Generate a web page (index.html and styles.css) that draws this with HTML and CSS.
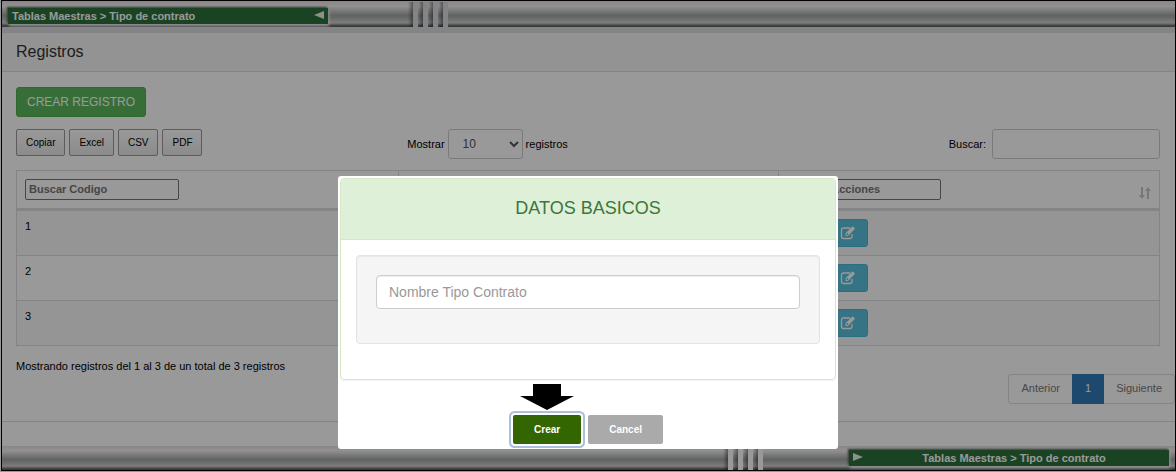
FILE: index.html
```html
<!DOCTYPE html>
<html lang="es">
<head>
<meta charset="utf-8">
<title>Tipo de contrato</title>
<link rel="stylesheet" href="styles.css">
</head>
<body>
<div class="frame">
  <header class="bar bar-top">
    <div class="crumb">
      <span class="crumb-text">Tablas Maestras &gt; Tipo de contrato</span>
      <svg class="crumb-arrow" width="10" height="8" viewBox="0 0 10 8"><path d="M0 4 10 0v8z" fill="#eee"/></svg>
    </div>
    <div class="ribs"></div>
  </header>

  <main class="panel">
    <h1 class="panel-title">Registros</h1>
    <div class="panel-body">
      <button class="btn-create" type="button">CREAR REGISTRO</button>
      <div class="tools">
        <div class="exports">
          <button class="btn-export" type="button">Copiar</button>
          <button class="btn-export" type="button">Excel</button>
          <button class="btn-export" type="button">CSV</button>
          <button class="btn-export" type="button">PDF</button>
        </div>
        <label class="length">Mostrar
          <select class="length-select"><option>10</option></select>
          registros</label>
        <label class="search">Buscar: <input class="search-input" type="search"></label>
      </div>
      <table class="grid">
        <thead>
          <tr>
            <th><input class="filter" type="text" placeholder="Buscar Codigo" aria-label="Buscar Codigo"></th>
            <th></th>
            <th>
              <div class="th-inner">
                <input class="filter" type="text" placeholder="Buscar Acciones" aria-label="Buscar Acciones">
                <svg class="sort" width="12" height="12" viewBox="0 0 12 12"><path d="M2 0h2v8h2L3 12 0 8h2zM8 12h2V4h2L9 0 6 4h2z" fill="#c6c6c6"/></svg>
              </div>
            </th>
          </tr>
        </thead>
        <tbody>
          <tr><td>1</td><td></td><td class="actions"><button class="btn-edit" type="button" aria-label="Editar"><svg width="16" height="14" viewBox="0 0 16 14"><path d="M10 2H3.500Q1.500 2 1.500 4v6.500q0 2 2 2H10q2 0 2-2V8" fill="none" stroke="#fff" stroke-width="1.300"/><path fill-rule="evenodd" d="M5.500 10V7.300L12 .8q.6-.5 1.200 0l1.300 1.300q.6.600 0 1.200L8 10zM6.500 7.800v1.300h1.200l.8-.8L7.300 7z" fill="#fff"/></svg></button></td></tr>
          <tr><td>2</td><td></td><td class="actions"><button class="btn-edit" type="button" aria-label="Editar"><svg width="16" height="14" viewBox="0 0 16 14"><path d="M10 2H3.500Q1.500 2 1.500 4v6.500q0 2 2 2H10q2 0 2-2V8" fill="none" stroke="#fff" stroke-width="1.300"/><path fill-rule="evenodd" d="M5.500 10V7.300L12 .8q.6-.5 1.200 0l1.300 1.300q.6.600 0 1.200L8 10zM6.500 7.800v1.300h1.200l.8-.8L7.300 7z" fill="#fff"/></svg></button></td></tr>
          <tr><td>3</td><td></td><td class="actions"><button class="btn-edit" type="button" aria-label="Editar"><svg width="16" height="14" viewBox="0 0 16 14"><path d="M10 2H3.500Q1.500 2 1.500 4v6.500q0 2 2 2H10q2 0 2-2V8" fill="none" stroke="#fff" stroke-width="1.300"/><path fill-rule="evenodd" d="M5.500 10V7.300L12 .8q.6-.5 1.200 0l1.300 1.300q.6.600 0 1.200L8 10zM6.500 7.800v1.300h1.200l.8-.8L7.300 7z" fill="#fff"/></svg></button></td></tr>
        </tbody>
      </table>
      <div class="summary">
        <p class="info">Mostrando registros del 1 al 3 de un total de 3 registros</p>
        <nav class="pager">
          <a class="page" href="#">Anterior</a>
          <a class="page page-current" href="#">1</a>
          <a class="page" href="#">Siguiente</a>
        </nav>
      </div>
    </div>
  </main>

  <footer class="bar bar-bottom">
    <div class="ribs"></div>
    <div class="crumb">
      <svg class="crumb-arrow" width="10" height="8" viewBox="0 0 10 8"><path d="M10 4 0 0v8z" fill="#eee"/></svg>
      <span class="crumb-text">Tablas Maestras &gt; Tipo de contrato</span>
    </div>
  </footer>
</div>

<div class="overlay">
  <form class="modal" role="dialog" aria-labelledby="modal-title">
    <section class="card">
      <h2 class="card-title" id="modal-title">DATOS BASICOS</h2>
      <div class="card-body">
        <div class="well">
          <input class="name-input" type="text" placeholder="Nombre Tipo Contrato" aria-label="Nombre Tipo Contrato">
        </div>
      </div>
    </section>
    <div class="modal-actions">
      <div class="confirm">
        <svg class="pointer" width="54" height="26" viewBox="0 0 54 26"><path d="M13 0h28v12h13L27 26 0 12h13z"/></svg>
        <button class="btn-modal btn-ok" type="button">Crear</button>
      </div>
      <button class="btn-modal btn-cancel" type="button">Cancel</button>
    </div>
  </form>
</div>
</body>
</html>
```

FILE: styles.css
```css
* {
  box-sizing: border-box;
}

body {
  margin: 0;
  background: #fff;
  color: #000;
  font: 11px/16px "Liberation Sans", Arial, sans-serif;
}

button,
input,
select {
  font-family: inherit;
}

.frame {
  display: flex;
  flex-direction: column;
  min-height: calc(100vh - 1px);
  margin: 0 0 1px 1px;
  border: 1px solid #000;
}

/* Metallic bars */
.bar {
  display: flex;
  background: linear-gradient(#e8dee4 0, #f3f3f3 20%, #d0d0d0 35%, #a2a5a7 56%, #b0b2b2 66%, #d0d0d0 84%, #606260 96%);
}

.bar-top {
  height: 32px;
  padding: 7px 6px 0;
  border-bottom: 6px solid #d9dcde;
  background-clip: padding-box;
}

.bar-bottom {
  height: 24px;
  margin-top: auto;
  padding: 0 6px;
  justify-content: flex-end;
}

.crumb {
  display: flex;
  width: 320px;
  height: 16px;
  padding: 0 4px;
  background: #2a713a;
  box-shadow: -1px -1px 2px #555, 1px 2px 3px #fff;
}

.crumb-text {
  flex: 1;
  color: #fff;
  font-weight: bold;
}

.crumb-arrow {
  margin-top: 3px;
}

.bar-bottom .crumb {
  margin-top: 4px;
}

.bar-bottom .crumb-text {
  text-align: center;
}

.ribs {
  width: 40px;
  background: repeating-linear-gradient(90deg, rgba(0, 0, 0, 0) 0, rgba(0, 0, 0, .4) 5px, #d9dcde 5px, #d9dcde 10px);
}

.bar-top .ribs {
  height: 25px;
  margin: -6px 0 0 80px;
}

.bar-bottom .ribs {
  margin-right: 86px;
  background: repeating-linear-gradient(90deg, rgba(0, 0, 0, 0) 0, rgba(0, 0, 0, .4) 5px, #fff 5px, #fff 10px);
}

/* Records panel */
.panel {
  border-bottom: 1px solid #ddd;
}

.panel-title {
  margin: 0;
  padding: 9px 14px;
  border-bottom: 1px solid #ddd;
  background: #f5f5f5;
  color: #333;
  font-size: 16px;
  line-height: 20px;
  font-weight: normal;
}

.panel-body {
  padding: 15px 15px 17px 14px;
}

.btn-create {
  display: block;
  height: 30px;
  padding: 0 10px;
  border: 1px solid #4cae4c;
  border-radius: 3px;
  background: #5cb85c;
  color: #fff;
  font-size: 12px;
}

.tools {
  display: grid;
  grid-template-columns: 1fr 1fr 1fr;
  margin: 12px 0 11px;
}

.exports {
  display: flex;
  gap: 4px;
}

.btn-export {
  height: 27px;
  padding: 0 9px;
  border: 1px solid #999;
  border-radius: 2px;
  background: linear-gradient(#fff, #e9e9e9);
  color: #000;
  font-size: 10px;
}

.length,
.search {
  display: flex;
  align-items: center;
}

.length {
  gap: 3px;
  padding-left: 10px;
}

.search {
  justify-content: flex-end;
  gap: 6px;
}

.length-select,
.search-input {
  height: 30px;
  border: 1px solid #ccc;
  border-radius: 3px;
  background: #fff;
  color: #555;
  font-size: 12px;
}

.length-select {
  width: 75px;
  padding: 5px 0 5px 10px;
}

.search-input {
  width: 168px;
  padding: 5px 10px;
}

.grid {
  width: 100%;
  border: 1px solid #ddd;
  border-spacing: 0;
  table-layout: fixed;
}

.grid th {
  height: 40px;
  padding: 8px;
  border-bottom: 3px solid #ddd;
  text-align: left;
  vertical-align: top;
}

.grid th + th {
  border-left: 1px solid #ddd;
}

.grid td {
  height: 45px;
  padding: 7px 8px;
  border-bottom: 1px solid #ddd;
  vertical-align: top;
}

.grid tbody tr:last-child td {
  height: 44px;
  border-bottom: 0;
}

.grid tbody tr:nth-child(odd) {
  background: #f9f9f9;
}

.th-inner {
  display: flex;
  justify-content: space-between;
  align-items: flex-end;
}

.sort {
  margin-bottom: 1px;
}

.filter {
  display: block;
  width: 154px;
  height: 21px;
  padding: 0 3px 2px;
  border: 1px solid #767676;
  border-radius: 2px;
  font-size: 11px;
  font-weight: bold;
}

.filter::placeholder {
  color: #757575;
}

.grid .actions {
  padding: 8px 8px 8px 50px;
}

.btn-edit {
  display: flex;
  align-items: center;
  justify-content: center;
  width: 40px;
  height: 28px;
  padding: 0;
  border: 1px solid #46b8da;
  border-radius: 3px;
  background: #5bc0de;
}

.summary {
  display: flex;
  justify-content: space-between;
  align-items: flex-start;
  padding-top: 12px;
}

.info {
  margin: 0;
}

.pager {
  display: flex;
  margin: 16px -15px 0 0;
}

.page {
  height: 30px;
  padding: 5px 12px;
  border: 1px solid #ddd;
  color: #777;
  text-decoration: none;
}

.page:first-child {
  border-right: 0;
  border-radius: 4px 0 0 4px;
}

.page:last-child {
  border-left: 0;
  border-radius: 0 4px 4px 0;
}

.page-current {
  border-color: #337ab7;
  background: #337ab7;
  color: #fff;
}

/* Modal */
.overlay {
  position: fixed;
  inset: 0;
  display: flex;
  justify-content: center;
  align-items: flex-start;
  padding-top: 176px;
  background: rgba(0, 0, 0, .4);
}

.modal {
  width: 500px;
  max-width: 100%;
  padding: 2px 2px 5px;
  border-radius: 3px;
  background: #fff;
}

.card {
  border: 1px solid #d6e9c6;
  border-radius: 4px;
  box-shadow: 0 1px 1px rgba(0, 0, 0, .05);
}

.card-title {
  margin: 0;
  padding: 17px 15px 19px;
  border-bottom: 1px solid #d6e9c6;
  border-radius: 3px 3px 0 0;
  background: #dff0d8;
  color: #3c763d;
  font-size: 18px;
  line-height: 24px;
  font-weight: normal;
  text-align: center;
}

.card-body {
  padding: 15px 15px 35px;
}

.well {
  padding: 19px 19px 34px;
  border: 1px solid #e3e3e3;
  border-radius: 4px;
  background: #f5f5f5;
  box-shadow: inset 0 1px 1px rgba(0, 0, 0, .05);
}

.name-input {
  display: block;
  width: 100%;
  height: 34px;
  padding: 6px 12px;
  border: 1px solid #ccc;
  border-radius: 4px;
  box-shadow: inset 0 1px 1px rgba(0, 0, 0, .075);
  font-size: 14px;
}

.name-input::placeholder {
  color: #999;
}

.modal-actions {
  display: flex;
  justify-content: center;
  align-items: flex-end;
  gap: 7px;
  padding-top: 4px;
}

.confirm {
  display: flex;
  flex-direction: column;
  align-items: center;
  gap: 5px;
}

.btn-modal {
  height: 29px;
  padding: 0 21px;
  border: 0;
  border-radius: 2px;
  color: #fff;
  font-size: 10px;
  font-weight: bold;
}

.btn-ok {
  background: #360;
  box-shadow: 0 0 0 2px #fff, 0 0 0 4px #a9c1da;
}

.btn-cancel {
  background: #aaa;
}
```
